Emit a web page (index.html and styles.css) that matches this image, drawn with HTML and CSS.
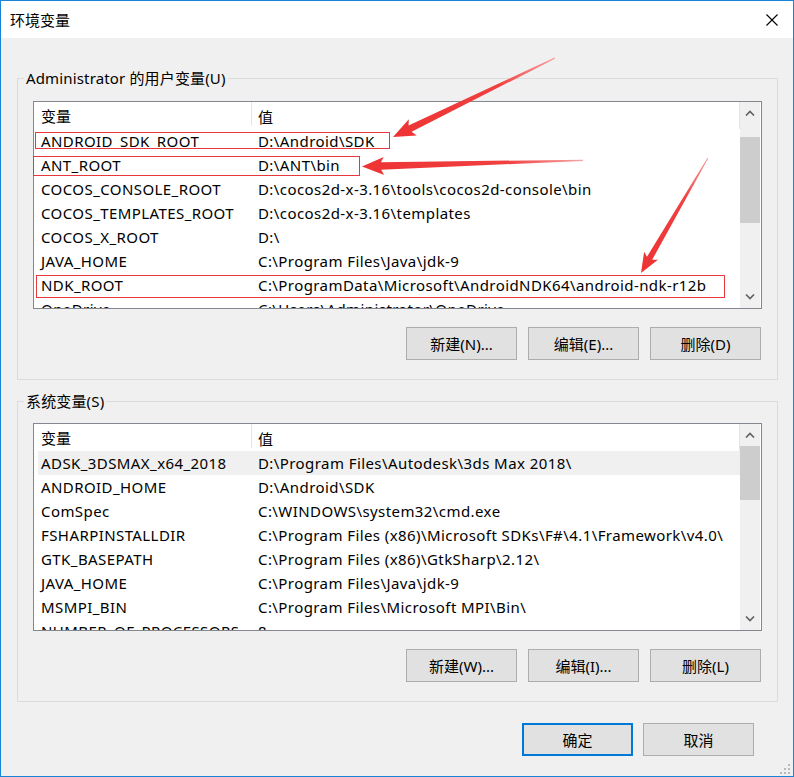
FILE: index.html
```html
<!DOCTYPE html>
<html lang="zh-CN">
<head>
<meta charset="utf-8">
<title>环境变量</title>
<link rel="stylesheet" href="styles.css">
</head>
<body>
<div class="window">
  <div class="titlebar">
    <span class="title">环境变量</span>
    <svg class="close" width="12" height="12" viewBox="0 0 12 12"><path d="M0.5 0.5 L11.5 11.5 M11.5 0.5 L0.5 11.5" stroke="#000" stroke-width="1.1" fill="none"/></svg>
  </div>
  <div class="content">
    <fieldset class="group group-user">
      <legend>Administrator 的用户变量(U)</legend>
      <div class="list">
        <div class="list-main">
          <div class="lv-header"><div class="c1">变量</div><div class="c2">值</div></div>
          <div class="row"><div class="c1">ANDROID_SDK_ROOT</div><div class="c2">D:\Android\SDK</div></div>
          <div class="row"><div class="c1">ANT_ROOT</div><div class="c2">D:\ANT\bin</div></div>
          <div class="row"><div class="c1">COCOS_CONSOLE_ROOT</div><div class="c2">D:\cocos2d-x-3.16\tools\cocos2d-console\bin</div></div>
          <div class="row"><div class="c1">COCOS_TEMPLATES_ROOT</div><div class="c2">D:\cocos2d-x-3.16\templates</div></div>
          <div class="row"><div class="c1">COCOS_X_ROOT</div><div class="c2">D:\</div></div>
          <div class="row"><div class="c1">JAVA_HOME</div><div class="c2">C:\Program Files\Java\jdk-9</div></div>
          <div class="row"><div class="c1">NDK_ROOT</div><div class="c2">C:\ProgramData\Microsoft\AndroidNDK64\android-ndk-r12b</div></div>
          <div class="row"><div class="c1">OneDrive</div><div class="c2">C:\Users\Administrator\OneDrive</div></div>
        </div>
        <div class="scrollbar">
          <div class="sb-btn"><svg width="10" height="6" viewBox="0 0 10 6"><path d="M1 5.5 L5 1.5 L9 5.5" stroke="#606060" stroke-width="1.6" fill="none"/></svg></div>
          <div class="sb-track"><div class="thumb" style="margin-top:13px;height:86px"></div></div>
          <div class="sb-btn"><svg width="10" height="6" viewBox="0 0 10 6"><path d="M1 0.5 L5 4.5 L9 0.5" stroke="#606060" stroke-width="1.6" fill="none"/></svg></div>
        </div>
      </div>
      <div class="btns">
        <button class="btn">新建(N)...</button>
        <button class="btn">编辑(E)...</button>
        <button class="btn">删除(D)</button>
      </div>
    </fieldset>

    <fieldset class="group group-sys">
      <legend>系统变量(S)</legend>
      <div class="list">
        <div class="list-main">
          <div class="lv-header"><div class="c1">变量</div><div class="c2">值</div></div>
          <div class="row sel"><div class="c1">ADSK_3DSMAX_x64_2018</div><div class="c2">D:\Program Files\Autodesk\3ds Max 2018\</div></div>
          <div class="row"><div class="c1">ANDROID_HOME</div><div class="c2">D:\Android\SDK</div></div>
          <div class="row"><div class="c1">ComSpec</div><div class="c2">C:\WINDOWS\system32\cmd.exe</div></div>
          <div class="row"><div class="c1">FSHARPINSTALLDIR</div><div class="c2">C:\Program Files (x86)\Microsoft SDKs\F#\4.1\Framework\v4.0\</div></div>
          <div class="row"><div class="c1">GTK_BASEPATH</div><div class="c2">C:\Program Files (x86)\GtkSharp\2.12\</div></div>
          <div class="row"><div class="c1">JAVA_HOME</div><div class="c2">C:\Program Files\Java\jdk-9</div></div>
          <div class="row"><div class="c1">MSMPI_BIN</div><div class="c2">C:\Program Files\Microsoft MPI\Bin\</div></div>
          <div class="row"><div class="c1">NUMBER_OF_PROCESSORS</div><div class="c2">8</div></div>
        </div>
        <div class="scrollbar">
          <div class="sb-btn"><svg width="10" height="6" viewBox="0 0 10 6"><path d="M1 5.5 L5 1.5 L9 5.5" stroke="#606060" stroke-width="1.6" fill="none"/></svg></div>
          <div class="sb-track"><div class="thumb" style="margin-top:0;height:54px"></div></div>
          <div class="sb-btn"><svg width="10" height="6" viewBox="0 0 10 6"><path d="M1 0.5 L5 4.5 L9 0.5" stroke="#606060" stroke-width="1.6" fill="none"/></svg></div>
        </div>
      </div>
      <div class="btns">
        <button class="btn">新建(W)...</button>
        <button class="btn">编辑(I)...</button>
        <button class="btn">删除(L)</button>
      </div>
    </fieldset>

    <div class="footer">
      <button class="btn btn-default">确定</button>
      <button class="btn">取消</button>
    </div>
  </div>

  <svg class="annotations" width="794" height="777" viewBox="0 0 794 777">
    <defs>
      <linearGradient id="fade" x1="0" y1="0" x2="1" y2="0">
        <stop offset="0" stop-color="#f6a5a5"/>
        <stop offset="0.35" stop-color="#f04040"/>
        <stop offset="1" stop-color="#ee3333"/>
      </linearGradient>
    </defs>
    <rect x="35.5" y="132.5" width="354" height="16" fill="none" stroke="#e8383d" stroke-width="1"/>
    <rect x="33.5" y="156.5" width="326" height="19" fill="none" stroke="#e8383d" stroke-width="1"/>
    <rect x="36.5" y="275.5" width="688" height="22" fill="none" stroke="#e8383d" stroke-width="1"/>
    <g transform="translate(393 137) rotate(154)">
      <polygon points="0,0 -22,-9 -19,-3.5 -180,-0.6 -180,0.6 -19,3.5 -22,9" fill="url(#fade)"/>
    </g>
    <g transform="translate(362 166.5) rotate(178.4)">
      <polygon points="0,0 -22,-9 -19,-3.8 -221,-0.6 -221,0.6 -19,3.8 -22,9" fill="url(#fade)"/>
    </g>
    <g transform="translate(641 273) rotate(120.2)">
      <polygon points="0,0 -20,-8 -17,-3 -133,-0.5 -133,0.5 -17,3 -20,8" fill="url(#fade)"/>
    </g>
  </svg>

  <svg class="grip" width="12" height="12" viewBox="0 0 12 12">
    <rect x="9" y="1" width="2" height="2" fill="#b9b9b9"/>
    <rect x="5" y="5" width="2" height="2" fill="#b9b9b9"/>
    <rect x="9" y="5" width="2" height="2" fill="#b9b9b9"/>
    <rect x="1" y="9" width="2" height="2" fill="#b9b9b9"/>
    <rect x="5" y="9" width="2" height="2" fill="#b9b9b9"/>
    <rect x="9" y="9" width="2" height="2" fill="#b9b9b9"/>
  </svg>
</div>
</body>
</html>
```

FILE: styles.css
```css
* { box-sizing: border-box; }

body {
  margin: 0;
  background: #ffffff;
  font-family: "Noto Sans", "Noto Sans CJK SC", sans-serif;
  font-size: 15px;
  color: #000;
}

.window {
  position: relative;
  width: 794px;
  height: 777px;
  border: 1px solid #1883d7;
  background: #f0f0f0;
  display: flex;
  flex-direction: column;
  overflow: hidden;
}

.titlebar {
  height: 37px;
  flex: none;
  background: #ffffff;
  display: flex;
  align-items: center;
  justify-content: space-between;
  padding: 0 15px 0 9px;
}

.title {
  font-family: "Noto Sans CJK SC", sans-serif;
  font-size: 15px;
  line-height: 20px;
}

.close { display: block; }

.content {
  flex: 1;
  display: flex;
  flex-direction: column;
  padding: 30px 15px 0 16px;
}

.group {
  margin: 0;
  min-width: 0;
  border: 1px solid #dcdcdc;
  padding: 13px 15px 19px 15px;
}

.group-sys {
  margin-top: 11px;
  padding-top: 12px;
}

.group legend {
  margin-left: -9px;
  padding: 0 2px;
  line-height: 20px;
  letter-spacing: 0.15px;
}

.list {
  height: 208px;
  border: 1px solid #828790;
  background: #ffffff;
  display: flex;
}

.list-main {
  flex: 1;
  min-width: 0;
  overflow: hidden;
}

.lv-header {
  height: 27px;
  display: flex;
  align-items: stretch;
  border-right: 1px solid #e5e5e5;
}

.lv-header .c1,
.lv-header .c2 {
  display: flex;
  align-items: center;
  padding-top: 2px;
}

.lv-header .c1 {
  width: 218px;
  padding-left: 7px;
  border-right: 1px solid #e5e5e5;
  margin-bottom: 3px;
}

.lv-header .c2 {
  padding-left: 6px;
}

.row {
  height: 24px;
  display: flex;
  align-items: center;
  margin-left: 4px;
  white-space: nowrap;
  letter-spacing: 0.42px;
}

.row.sel { background: #f0f0f0; }

.row .c1 {
  width: 214px;
  flex: none;
  padding-left: 3px;
}

.row .c2 {
  padding-left: 6px;
}

.scrollbar {
  width: 20px;
  margin-right: 1px;
  background: #f0f0f0;
  display: flex;
  flex-direction: column;
}

.sb-btn {
  height: 22px;
  flex: none;
  display: flex;
  align-items: center;
  justify-content: center;
}

.sb-btn svg { display: block; }

.sb-track {
  flex: 1;
  overflow: hidden;
}

.thumb { background: #cdcdcd; }

.btns {
  display: flex;
  justify-content: flex-end;
  gap: 11px;
  margin-top: 18px;
  padding-right: 1px;
}

.btn {
  width: 111px;
  height: 33px;
  margin: 0;
  padding: 0;
  border: 1px solid #adadad;
  background: #e1e1e1;
  font-family: "Noto Sans", "Noto Sans CJK SC", sans-serif;
  font-size: 15px;
  color: #000;
}

.btn-default { border: 2px solid #0078d7; }

.footer {
  display: flex;
  justify-content: flex-end;
  gap: 10px;
  margin-top: 21px;
  padding-right: 24px;
}

.annotations {
  position: absolute;
  left: -1px;
  top: -1px;
  pointer-events: none;
}

.grip {
  position: absolute;
  right: 2px;
  bottom: 1px;
}
```
